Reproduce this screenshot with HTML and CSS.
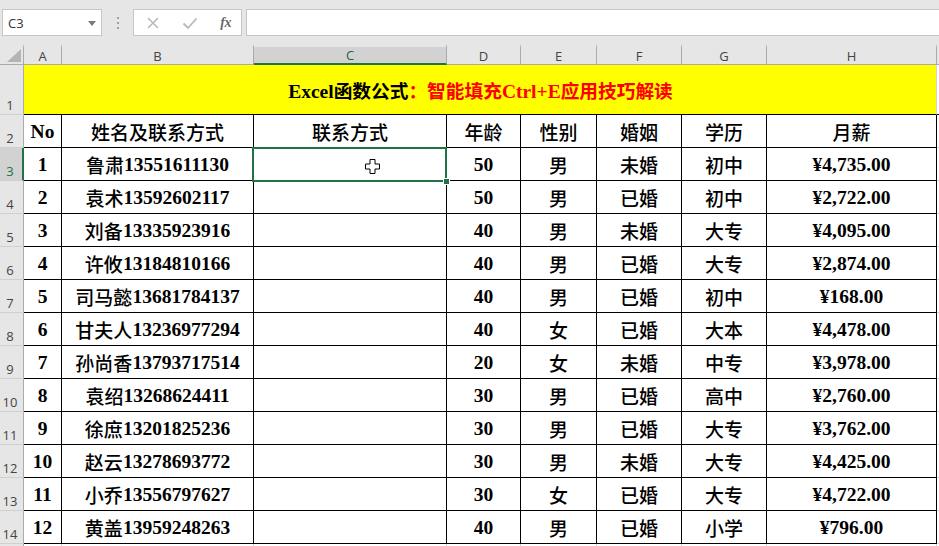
FILE: index.html
```html
<!DOCTYPE html>
<html lang="zh">
<head>
<meta charset="utf-8">
<title>Excel</title>
<link rel="stylesheet" href="styles.css">
</head>
<body>
<div class="app">
  <div class="toolbar">
    <div class="namebox"><span class="ref">C3</span><svg class="drop" width="8" height="5" viewBox="0 0 8 5"><path d="M0 0H8L4 5Z" fill="#7a7a7a"/></svg></div>
    <svg class="dots" width="4" height="12" viewBox="0 0 4 12"><rect x="1" y="0" width="2" height="2" fill="#a0a0a0"/><rect x="1" y="5" width="2" height="2" fill="#a0a0a0"/><rect x="1" y="10" width="2" height="2" fill="#a0a0a0"/></svg>
    <div class="fxbtns">
      <svg class="btn" width="14" height="14" viewBox="0 0 14 14"><path d="M2 2L12 12M12 2L2 12" stroke="#b8b8b8" stroke-width="1.6" fill="none"/></svg>
      <svg class="btn" width="16" height="14" viewBox="0 0 16 14"><path d="M1.5 7.5L6 12L14.5 2.5" stroke="#b8b8b8" stroke-width="1.8" fill="none"/></svg>
      <span class="fx">fx</span>
    </div>
    <div class="formula"></div>
  </div>

  <div class="sheet">
    <!-- column headers -->
    <div class="corner"><svg width="14" height="13" viewBox="0 0 14 13"><path d="M14 0V13H0Z" fill="#b4b4b4"/></svg></div>
    <div class="ch">A</div><div class="ch">B</div><div class="ch chsel">C</div><div class="ch">D</div><div class="ch">E</div><div class="ch">F</div><div class="ch">G</div><div class="ch">H</div><div class="ch chf"></div>

    <!-- row 1 -->
    <div class="rh">1</div>
    <div class="title"><span class="blk">Excel<span class="zh zb">函数公式</span></span><span class="red"><span class="zh zb">：智能填充</span>Ctrl+E<span class="zh zb">应用技巧解读</span></span></div>
    <div class="f ft"></div>

    <!-- row 2 -->
    <div class="rh">2</div>
    <div class="c">No</div><div class="c"><span class="zh">姓名及联系方式</span></div><div class="c"><span class="zh">联系方式</span></div><div class="c"><span class="zh">年龄</span></div><div class="c"><span class="zh">性别</span></div><div class="c"><span class="zh">婚姻</span></div><div class="c"><span class="zh">学历</span></div><div class="c"><span class="zh">月薪</span></div><div class="f"></div>

    <!-- row 3 -->
    <div class="rh rhsel">3</div>
    <div class="c">1</div><div class="c"><span class="zh">鲁肃</span>13551611130</div><div class="c sel"><svg class="cursor" width="15" height="15" viewBox="0 0 15 15"><path d="M5 0.5H10V5H14.5V10H10V14.5H5V10H0.5V5H5Z" fill="#fff" stroke="#000" stroke-width="1"/></svg><span class="handle"></span></div><div class="c">50</div><div class="c"><span class="zh">男</span></div><div class="c"><span class="zh">未婚</span></div><div class="c"><span class="zh">初中</span></div><div class="c">¥4,735.00</div><div class="f"></div>

    <div class="rh">4</div>
    <div class="c">2</div><div class="c"><span class="zh">袁术</span>13592602117</div><div class="c"></div><div class="c">50</div><div class="c"><span class="zh">男</span></div><div class="c"><span class="zh">已婚</span></div><div class="c"><span class="zh">初中</span></div><div class="c">¥2,722.00</div><div class="f"></div>

    <div class="rh">5</div>
    <div class="c">3</div><div class="c"><span class="zh">刘备</span>13335923916</div><div class="c"></div><div class="c">40</div><div class="c"><span class="zh">男</span></div><div class="c"><span class="zh">未婚</span></div><div class="c"><span class="zh">大专</span></div><div class="c">¥4,095.00</div><div class="f"></div>

    <div class="rh">6</div>
    <div class="c">4</div><div class="c"><span class="zh">许攸</span>13184810166</div><div class="c"></div><div class="c">40</div><div class="c"><span class="zh">男</span></div><div class="c"><span class="zh">已婚</span></div><div class="c"><span class="zh">大专</span></div><div class="c">¥2,874.00</div><div class="f"></div>

    <div class="rh">7</div>
    <div class="c">5</div><div class="c"><span class="zh">司马懿</span>13681784137</div><div class="c"></div><div class="c">40</div><div class="c"><span class="zh">男</span></div><div class="c"><span class="zh">已婚</span></div><div class="c"><span class="zh">初中</span></div><div class="c">¥168.00</div><div class="f"></div>

    <div class="rh">8</div>
    <div class="c">6</div><div class="c"><span class="zh">甘夫人</span>13236977294</div><div class="c"></div><div class="c">40</div><div class="c"><span class="zh">女</span></div><div class="c"><span class="zh">已婚</span></div><div class="c"><span class="zh">大本</span></div><div class="c">¥4,478.00</div><div class="f"></div>

    <div class="rh">9</div>
    <div class="c">7</div><div class="c"><span class="zh">孙尚香</span>13793717514</div><div class="c"></div><div class="c">20</div><div class="c"><span class="zh">女</span></div><div class="c"><span class="zh">未婚</span></div><div class="c"><span class="zh">中专</span></div><div class="c">¥3,978.00</div><div class="f"></div>

    <div class="rh">10</div>
    <div class="c">8</div><div class="c"><span class="zh">袁绍</span>13268624411</div><div class="c"></div><div class="c">30</div><div class="c"><span class="zh">男</span></div><div class="c"><span class="zh">已婚</span></div><div class="c"><span class="zh">高中</span></div><div class="c">¥2,760.00</div><div class="f"></div>

    <div class="rh">11</div>
    <div class="c">9</div><div class="c"><span class="zh">徐庶</span>13201825236</div><div class="c"></div><div class="c">30</div><div class="c"><span class="zh">男</span></div><div class="c"><span class="zh">已婚</span></div><div class="c"><span class="zh">大专</span></div><div class="c">¥3,762.00</div><div class="f"></div>

    <div class="rh">12</div>
    <div class="c">10</div><div class="c"><span class="zh">赵云</span>13278693772</div><div class="c"></div><div class="c">30</div><div class="c"><span class="zh">男</span></div><div class="c"><span class="zh">未婚</span></div><div class="c"><span class="zh">大专</span></div><div class="c">¥4,425.00</div><div class="f"></div>

    <div class="rh">13</div>
    <div class="c">11</div><div class="c"><span class="zh">小乔</span>13556797627</div><div class="c"></div><div class="c">30</div><div class="c"><span class="zh">女</span></div><div class="c"><span class="zh">已婚</span></div><div class="c"><span class="zh">大专</span></div><div class="c">¥4,722.00</div><div class="f"></div>

    <div class="rh">14</div>
    <div class="c">12</div><div class="c"><span class="zh">黄盖</span>13959248263</div><div class="c"></div><div class="c">40</div><div class="c"><span class="zh">男</span></div><div class="c"><span class="zh">已婚</span></div><div class="c"><span class="zh">小学</span></div><div class="c">¥796.00</div><div class="f"></div>

    <div class="rh"></div>
    <div class="e"></div><div class="e"></div><div class="e"></div><div class="e"></div><div class="e"></div><div class="e"></div><div class="e"></div><div class="e"></div><div class="f"></div>
  </div>
</div>
</body>
</html>
```

FILE: styles.css
```css
* { box-sizing: border-box; }
html, body { margin: 0; padding: 0; }
body { width: 939px; height: 546px; overflow: hidden; background: #fff; }
.app { width: 939px; height: 546px; overflow: hidden; font-family: "Open Sans", "Liberation Sans", sans-serif; }

/* toolbar */
.toolbar { height: 44px; background: #e6e6e6; display: flex; align-items: flex-start; padding-top: 9px; }
.namebox { margin-left: 2px; width: 100px; height: 27px; background: #fff; border: 1px solid #c6c6c6; display: flex; align-items: center; justify-content: space-between; padding: 0 5px 0 5px; }
.ref { font-size: 13px; color: #333; font-family: "Open Sans", "Liberation Sans", sans-serif; }
.drop { margin-top: 1px; }
.dots { margin: 8px 13px 0 14px; }
.fxbtns { width: 109px; height: 27px; background: #fff; border: 1px solid #c6c6c6; display: flex; align-items: center; justify-content: space-between; padding: 0 10px 0 12px; }
.fx { font-family: "Liberation Serif", serif; font-style: italic; font-weight: bold; font-size: 14px; color: #6a6a6a; letter-spacing: -0.5px; }
.formula { flex: 1; margin-left: 4px; margin-right: -3px; height: 27px; background: #fff; border: 1px solid #c6c6c6; }

/* sheet grid */
.sheet { display: grid; grid-template-columns: 24px 38px 192px 193px 74px 76px 85px 85px 170px 1fr; grid-template-rows: 21px 50px 33px repeat(12, 33px) 33px; }
.corner { background: #e6e6e6; border-top: 3px solid #e6e6e6; border-right: 1px solid #ababab; border-bottom: 1px solid #ababab; display: flex; align-items: flex-end; justify-content: flex-end; padding: 0 2px 2px 0; }
.ch { background: #e6e6e6; border-top: 3px solid #e6e6e6; border-right: 1px solid #ababab; border-bottom: 1px solid #ababab; font-size: 13px; color: #444; display: flex; align-items: flex-end; justify-content: center; line-height: 16px; }
.chsel { background: #d2d2d2; border-bottom: 2px solid #217346; color: #2c5d45; }
.chf { border-right: none; }

.rh { background: #e6e6e6; border-right: 1px solid #ababab; border-bottom: 1px solid #d0d0d0; font-size: 13px; color: #444; display: flex; align-items: flex-end; justify-content: center; padding-right: 3px; line-height: 15px; padding-bottom: 1px; }
.rhsel { background: #d2d2d2; border-right: 2px solid #217346; color: #217346; padding-right: 2px; }

.title { grid-column: 2 / 10; background: #ffff00; border-bottom: 1px solid #000; border-right: 1px solid #d4d4d4; display: flex; align-items: center; justify-content: center; font-family: "Liberation Serif", "Noto Sans CJK SC", serif; font-weight: bold; font-size: 19.5px; padding-left: 1px; }
.blk { color: #000; }
.red { color: #ff0000; }

.c { border-right: 1px solid #000; border-bottom: 1px solid #000; display: flex; align-items: center; justify-content: center; font-family: "Liberation Serif", "Noto Sans CJK SC", serif; font-weight: bold; font-size: 19.5px; color: #000; white-space: nowrap; padding-top: 1px; }
.zh { font-family: "Noto Sans CJK SC", sans-serif; font-weight: 500; font-size: 19px; }
.zb { font-weight: 700; font-size: 18.7px; }
.e { border-right: 1px solid #d4d4d4; border-bottom: 1px solid #d4d4d4; }
.f { border-bottom: 1px solid #d4d4d4; }
.ft { border-bottom: 1px solid #000; }

/* selected cell */
.sel { position: relative; }
.sel::after { content: ""; position: absolute; left: -2px; top: -1px; right: -1px; bottom: -2px; border: 2px solid #217346; pointer-events: none; }
.handle { position: absolute; right: -4px; bottom: -5px; width: 7px; height: 7px; background: #217346; border: 1px solid #fff; z-index: 2; }
.cursor { position: absolute; left: 111px; top: 11px; }
```
